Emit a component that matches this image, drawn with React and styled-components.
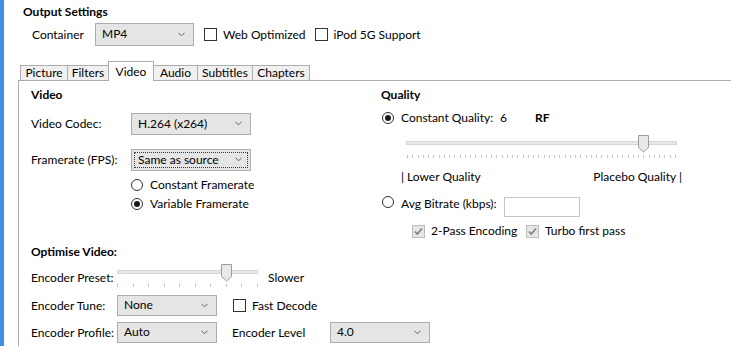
import React from "react";
import styled, { createGlobalStyle } from "styled-components";

const FONT = `"Segoe UI", Lato, "Liberation Sans", sans-serif`;

const GlobalStyle = createGlobalStyle`
  html, body {
    margin: 0;
    padding: 0;
    background: #ffffff;
  }
  body {
    font-family: ${FONT};
    font-size: 12px;
    color: #000000;
  }
  * { box-sizing: border-box; }
`;

// 화면 전체
const Page = styled.div`
  display: flex;
  width: 731px;
  height: 346px;
  overflow: hidden;
`;

const Stripe = styled.div`
  width: 4px;
  flex-shrink: 0;
  background: #4190e0;
`;

const Main = styled.div`
  flex: 1;
  margin-left: 14px;
  display: flex;
  flex-direction: column;
`;

const Title = styled.div`
  font-weight: bold;
  line-height: 16px;
  height: 16px;
  margin-top: ${(p) => p.$top || 0}px;
  padding-left: ${(p) => p.$indent || 0}px;
  white-space: nowrap;
`;

const Row = styled.div`
  display: flex;
  align-items: ${(p) => p.$align || "center"};
  height: ${(p) => p.$h || 16}px;
  margin-top: ${(p) => p.$top || 0}px;
  padding-left: ${(p) => p.$indent || 0}px;
  white-space: nowrap;
`;

const Label = styled.span`
  display: inline-block;
  line-height: 16px;
  width: ${(p) => (p.$w ? `${p.$w}px` : "auto")};
  margin-left: ${(p) => p.$ml || 0}px;
  margin-top: ${(p) => p.$mt || 0}px;
  font-weight: ${(p) => (p.$bold ? "bold" : "normal")};
  flex-shrink: 0;
`;

/* 드롭다운 */
const SelectBox = styled.div`
  position: relative;
  width: ${(p) => p.$w}px;
  height: ${(p) => p.$h || 21}px;
  background: #e5e5e5;
  border: 1px solid #acacac;
  margin-left: ${(p) => p.$ml || 0}px;
  flex-shrink: 0;
  padding: 2px;
`;

const SelectInner = styled.div`
  height: 100%;
  display: flex;
  align-items: center;
  justify-content: space-between;
  padding: 0 5px 1px 3px;
  border: 1px ${(p) => (p.$focused ? "dotted #3a3a3a" : "solid transparent")};
  line-height: 14px;
`;

const Chevron = () => (
  <svg width="7" height="5" viewBox="0 0 7 5">
    <path d="M0.5 0.8 L3.5 3.8 L6.5 0.8" fill="none" stroke="#606060" strokeWidth="1" />
  </svg>
);

const Select = ({ w, h, ml, focused, children }) => (
  <SelectBox $w={w} $h={h} $ml={ml}>
    <SelectInner $focused={focused}>
      <span>{children}</span>
      <Chevron />
    </SelectInner>
  </SelectBox>
);

/* 체크박스 */
const CheckBox = styled.span`
  display: inline-flex;
  align-items: center;
  justify-content: center;
  width: 13px;
  height: 13px;
  flex-shrink: 0;
  border: 1px solid ${(p) => (p.$disabled ? "#bcbcbc" : "#333333")};
  background: ${(p) => (p.$disabled ? "#e6e6e6" : "#ffffff")};
  margin-left: ${(p) => p.$ml || 0}px;
`;

const CheckItem = styled.span`
  display: inline-flex;
  align-items: center;
  gap: 6px;
  width: ${(p) => (p.$w ? `${p.$w}px` : "auto")};
  margin-left: ${(p) => p.$ml || 0}px;
  flex-shrink: 0;
`;

const Check = ({ checked, disabled, ml, w, children }) => (
  <CheckItem $ml={ml} $w={w}>
    <CheckBox $disabled={disabled}>
      {checked && (
        <svg width="11" height="11" viewBox="0 0 11 11">
          <path d="M2 5.5 L4.3 8 L9 2.5" fill="none" stroke="#7d7d7d" strokeWidth="1.6" />
        </svg>
      )}
    </CheckBox>
    <Label>{children}</Label>
  </CheckItem>
);

/* 라디오 버튼 */
const RadioCircle = styled.span`
  display: inline-flex;
  align-items: center;
  justify-content: center;
  width: 12px;
  height: 12px;
  border-radius: 50%;
  border: 1px solid #333333;
  background: #ffffff;
  flex-shrink: 0;
  margin-right: 7px;
`;

const RadioDot = styled.span`
  width: 6px;
  height: 6px;
  border-radius: 50%;
  background: #1a1a1a;
`;

const Radio = ({ checked }) => <RadioCircle>{checked && <RadioDot />}</RadioCircle>;

/* 탭 */
const TabStrip = styled.div`
  display: flex;
  align-items: flex-end;
  height: 20px;
  margin-top: 15px;
  margin-bottom: -1px;
  padding-left: 2px;
  position: relative;
  z-index: 1;
`;

const Tab = styled.div`
  width: ${(p) => p.$w}px;
  height: ${(p) => (p.$active ? 20 : 16)}px;
  margin-left: -1px;
  display: flex;
  align-items: ${(p) => (p.$active ? "flex-start" : "center")};
  padding-top: ${(p) => (p.$active ? 3 : 0)}px;
  justify-content: center;
  background: ${(p) => (p.$active ? "#ffffff" : "#f0f0f0")};
  border: 1px solid #acacac;
  border-bottom: ${(p) => (p.$active ? "none" : "1px solid #acacac")};
  line-height: 14px;
  &:first-child { margin-left: 0; }
`;

const Panel = styled.div`
  flex: 1;
  border-top: 1px solid #acacac;
  border-left: 1px solid #acacac;
  padding-left: 12px;
`;

const Columns = styled.div`
  display: grid;
  grid-template-columns: 350px 1fr;
`;

const Column = styled.div`
  display: flex;
  flex-direction: column;
`;

/* 슬라이더 */
const SliderBox = styled.div`
  position: relative;
  width: ${(p) => p.$w}px;
  height: 26px;
  margin-left: ${(p) => p.$ml || 0}px;
  margin-top: ${(p) => p.$top || 0}px;
  flex-shrink: 0;
`;

const Track = styled.div`
  margin-top: 7px;
  height: 4px;
  background: #e7e7e7;
  border: 1px solid #d6d6d6;
`;

const Ticks = styled.div`
  display: flex;
  justify-content: space-between;
  margin-top: 10px;
  padding: 0 ${(p) => p.$inset || 0}px;
`;

const Tick = styled.span`
  width: 1px;
  height: 3px;
  background: #c4c4c4;
`;

const Thumb = styled.svg`
  position: absolute;
  top: 1px;
`;

const Slider = ({ w, ml, top, count, index, inset = 0 }) => {
  const span = w - inset * 2 - 1;
  const x = inset + (span * index) / (count - 1);
  return (
    <SliderBox $w={w} $ml={ml} $top={top}>
      <Track />
      <Ticks $inset={inset}>
        {[...Array(count)].map((_, i) => (
          <Tick key={i} />
        ))}
      </Ticks>
      <Thumb width="11" height="18" viewBox="0 0 11 18" style={{ left: Math.round(x - 5) }}>
        <path d="M0.5 0.5 H10.5 V12.5 L5.5 17 L0.5 12.5 Z" fill="#e9e9e9" stroke="#9d9d9d" />
      </Thumb>
    </SliderBox>
  );
};

const TextInput = styled.div`
  width: 76px;
  height: 20px;
  border: 1px solid #c6c6c6;
  background: #ffffff;
  margin-top: 1px;
`;

const QualityLabels = styled.div`
  display: flex;
  justify-content: space-between;
  width: 281px;
  margin-left: 20px;
  margin-top: 9px;
  line-height: 16px;
  height: 16px;
`;

const tabs = [
  { name: "Picture", w: 48 },
  { name: "Filters", w: 42 },
  { name: "Video", w: 46, active: true },
  { name: "Audio", w: 45 },
  { name: "Subtitles", w: 56 },
  { name: "Chapters", w: 58 },
];

const App = () => {
  return (
    <Page>
      <GlobalStyle />
      <Stripe />
      <Main>
        <Title $top={4} $indent={5}>Output Settings</Title>
        <Row $h={23} $top={3} $indent={14}>
          <Label $w={63}>Container</Label>
          <Select w={99} h={23}>MP4</Select>
          <Check ml={10}>Web Optimized</Check>
          <Check ml={9}>iPod 5G Support</Check>
        </Row>

        <TabStrip>
          {tabs.map((t) => (
            <Tab key={t.name} $w={t.w} $active={t.active}>
              {t.name}
            </Tab>
          ))}
        </TabStrip>

        <Panel>
          <Columns>
            <Column>
              <Title $top={6}>Video</Title>
              <Row $h={22} $top={10}>
                <Label $w={100}>Video Codec:</Label>
                <Select w={120} h={22}>H.264 (x264)</Select>
              </Row>
              <Row $h={22} $top={14}>
                <Label $w={100}>Framerate (FPS):</Label>
                <Select w={120} h={22} focused>Same as source</Select>
              </Row>
              <Row $top={6} $indent={100}>
                <Radio />
                <Label>Constant Framerate</Label>
              </Row>
              <Row $top={3} $indent={100}>
                <Radio checked />
                <Label>Variable Framerate</Label>
              </Row>
            </Column>

            <Column>
              <Title $top={6}>Quality</Title>
              <Row $top={7} $indent={1}>
                <Radio checked />
                <Label $w={99}>Constant Quality:</Label>
                <Label $w={35}>6</Label>
                <Label $bold>RF</Label>
              </Row>
              <Slider w={271} ml={25} top={8} count={52} index={45} inset={1} />
              <QualityLabels>
                <span>| Lower Quality</span>
                <span>Placebo Quality |</span>
              </QualityLabels>
              <Row $h={21} $top={11} $indent={1} $align="flex-start">
                <Radio checked={false} />
                <Label $w={103}>Avg Bitrate (kbps):</Label>
                <TextInput />
              </Row>
              <Row $top={6} $indent={31}>
                <Check checked disabled w={114}>2-Pass Encoding</Check>
                <Check checked disabled>Turbo first pass</Check>
              </Row>
            </Column>
          </Columns>

          <Title $top={5}>Optimise Video:</Title>
          <Row $h={28} $top={3} $align="flex-start">
            <Label $w={86} $mt={7}>Encoder Preset:</Label>
            <Slider w={141} count={10} index={7} />
            <Label $ml={10} $mt={7}>Slower</Label>
          </Row>
          <Row $h={21} $top={4}>
            <Label $w={86}>Encoder Tune:</Label>
            <Select w={100} h={21}>None</Select>
            <Check ml={16}>Fast Decode</Check>
          </Row>
          <Row $h={21} $top={6}>
            <Label $w={86}>Encoder Profile:</Label>
            <Select w={100} h={21}>Auto</Select>
            <Label $w={98} $ml={15}>Encoder Level</Label>
            <Select w={100} h={21}>4.0</Select>
          </Row>
        </Panel>
      </Main>
    </Page>
  );
};

export default App;
